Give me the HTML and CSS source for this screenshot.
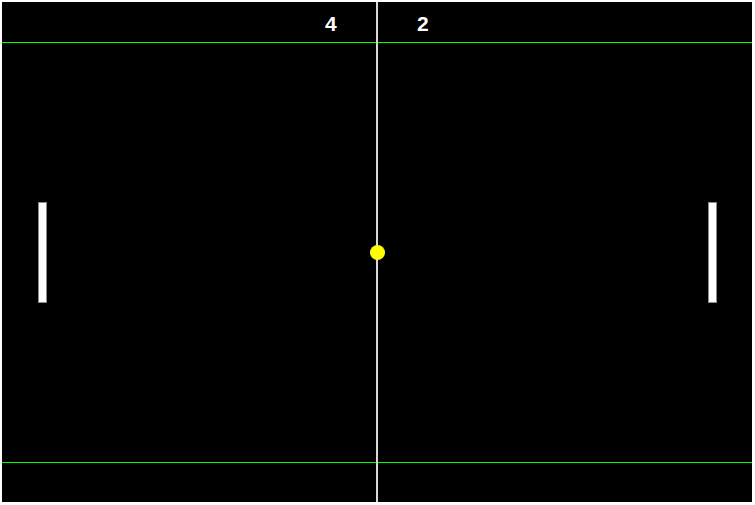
FILE: index.html
```html
<!DOCTYPE html>
<html lang="en">
<head>
<meta charset="utf-8">
<title>Pong</title>
<link rel="stylesheet" href="styles.css">
</head>
<body>
  <div class="court">
    <div class="bound bound-top"></div>
    <div class="bound bound-bottom"></div>
    <div class="net"></div>
    <div class="score score-left">4</div>
    <div class="score score-right">2</div>
    <div class="paddle paddle-left"></div>
    <div class="paddle paddle-right"></div>
    <div class="ball"></div>
  </div>
</body>
</html>
```
FILE: styles.css
```css
html, body {
  margin: 0;
  padding: 0;
  background: #ffffff;
}
body {
  padding: 2px;
}
.court {
  position: relative;
  width: 750px;
  height: 500px;
  background: #000000;
  overflow: hidden;
}
.bound {
  position: absolute;
  left: 0;
  right: 0;
  height: 1px;
  background: #00ff00;
}
.bound-top { top: 40px; }
.bound-bottom { top: 460px; }
.net {
  position: absolute;
  top: 0;
  bottom: 0;
  left: 374px;
  width: 2px;
  background: #d8d8d8;
}
.score {
  position: absolute;
  top: 11px;
  font-family: "Liberation Sans", Arial, sans-serif;
  font-weight: bold;
  font-size: 21px;
  line-height: 21px;
  color: #ffffff;
}
.score-left { left: 323px; }
.score-right { left: 415px; }
.paddle {
  position: absolute;
  top: 200px;
  width: 9px;
  height: 101px;
  box-sizing: border-box;
  background: #ffffff;
  border: 1px solid #8a8a8a;
}
.paddle-left { left: 36px; }
.paddle-right { left: 706px; }
.ball {
  position: absolute;
  left: 368px;
  top: 243px;
  width: 15px;
  height: 15px;
  border-radius: 50%;
  background: #ffff00;
}
```
